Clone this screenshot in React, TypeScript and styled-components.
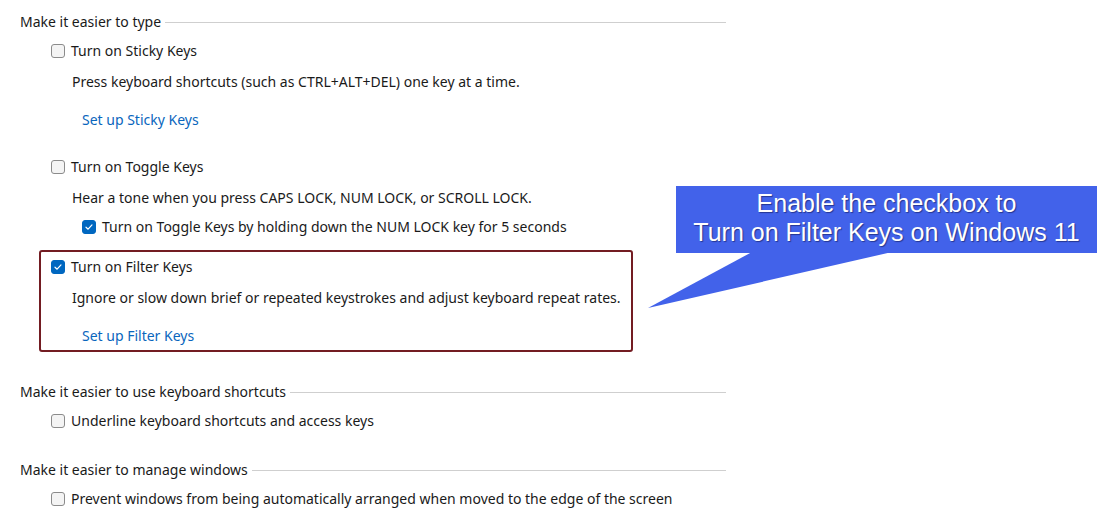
import styled, { createGlobalStyle } from 'styled-components';

const GlobalStyle = createGlobalStyle`
  html, body {
    margin: 0;
    padding: 0;
    background: #ffffff;
  }
  body {
    font-family: "Noto Sans", "Open Sans", sans-serif;
    color: #1a1a1a;
  }
`;

const Page = styled.div`
  position: relative;
  width: 1112px;
  height: 516px;
  overflow: hidden;
  box-sizing: border-box;
  padding: 11px 0 0 20px;
  font-size: 14px;
`;

const Column = styled.div`
  width: 706px;
  display: flex;
  flex-direction: column;
`;

const Heading = styled.div<{ $top?: number }>`
  display: flex;
  align-items: center;
  gap: 4px;
  height: 22px;
  line-height: 22px;
  margin-top: ${({ $top }) => $top ?? 0}px;
  white-space: nowrap;

  &::after {
    content: '';
    flex: 1;
    height: 1px;
    background: #cfcfcf;
  }
`;

const Row = styled.div<{ $top: number; $indent: number }>`
  display: flex;
  align-items: center;
  height: 22px;
  line-height: 22px;
  margin-top: ${({ $top }) => $top}px;
  padding-left: ${({ $indent }) => $indent}px;
  white-space: nowrap;
`;

const Box = styled.span<{ $checked?: boolean }>`
  width: 14px;
  height: 14px;
  box-sizing: border-box;
  border-radius: 3px;
  margin-right: 6px;
  flex: none;
  display: flex;
  align-items: center;
  justify-content: center;
  background: ${({ $checked }) => ($checked ? '#0067c0' : '#f4f4f4')};
  border: 1px solid ${({ $checked }) => ($checked ? '#0067c0' : '#8b8b8b')};
`;

const Link = styled.span`
  color: #0a66bd;
`;

const Highlight = styled.div`
  margin: 12px 0 0 19px;
  width: 594px;
  box-sizing: border-box;
  border: 2px solid #731c22;
  border-radius: 3px;
  padding: 4px 0 3px 10px;
  display: flex;
  flex-direction: column;
`;

const Callout = styled.div`
  position: absolute;
  left: 676px;
  top: 186px;
  width: 421px;
  height: 67px;
  box-sizing: border-box;
  padding-bottom: 4px;
  background: #4262ea;
  color: #ffffff;
  font-family: "Liberation Sans", Arial, sans-serif;
  font-size: 25px;
  line-height: 29px;
  text-align: center;
  display: flex;
  flex-direction: column;
  justify-content: center;
  text-shadow: 1px 1px 1px rgba(0, 0, 40, 0.45);
`;

const Tail = styled.svg`
  position: absolute;
  left: 640px;
  top: 250px;
`;

function CheckBox({ checked }: { checked?: boolean }) {
  return (
    <Box $checked={checked}>
      {checked && (
        <svg width="10" height="10" viewBox="0 0 10 10">
          <path d="M2 5.2 L4.1 7.2 L8 2.9" fill="none" stroke="#ffffff" strokeWidth="1.2" strokeLinecap="round" strokeLinejoin="round" />
        </svg>
      )}
    </Box>
  );
}

export default function App() {
  return (
    <>
      <GlobalStyle />
      <Page>
        <Column>
          <Heading>Make it easier to type</Heading>
          <Row $top={7} $indent={31}>
            <CheckBox />
            Turn on Sticky Keys
          </Row>
          <Row $top={9} $indent={52}>
            Press keyboard shortcuts (such as CTRL+ALT+DEL) one key at a time.
          </Row>
          <Row $top={16} $indent={62}>
            <Link>Set up Sticky Keys</Link>
          </Row>
          <Row $top={25} $indent={31}>
            <CheckBox />
            Turn on Toggle Keys
          </Row>
          <Row $top={9} $indent={52}>
            Hear a tone when you press CAPS LOCK, NUM LOCK, or SCROLL LOCK.
          </Row>
          <Row $top={7} $indent={62}>
            <CheckBox checked />
            Turn on Toggle Keys by holding down the NUM LOCK key for 5 seconds
          </Row>
          <Highlight>
            <Row $top={0} $indent={0}>
              <CheckBox checked />
              Turn on Filter Keys
            </Row>
            <Row $top={9} $indent={21}>
              Ignore or slow down brief or repeated keystrokes and adjust keyboard repeat rates.
            </Row>
            <Row $top={16} $indent={31}>
              <Link>Set up Filter Keys</Link>
            </Row>
          </Highlight>
          <Heading $top={29}>Make it easier to use keyboard shortcuts</Heading>
          <Row $top={7} $indent={31}>
            <CheckBox />
            Underline keyboard shortcuts and access keys
          </Row>
          <Heading $top={27}>Make it easier to manage windows</Heading>
          <Row $top={7} $indent={31}>
            <CheckBox />
            Prevent windows from being automatically arranged when moved to the edge of the screen
          </Row>
        </Column>
        <Tail width="260" height="64" viewBox="0 0 260 64">
          <polygon points="112,2 252,2 8,58" fill="#4262ea" />
        </Tail>
        <Callout>
          <div>Enable the checkbox to</div>
          <div>Turn on Filter Keys on Windows 11</div>
        </Callout>
      </Page>
    </>
  );
}
